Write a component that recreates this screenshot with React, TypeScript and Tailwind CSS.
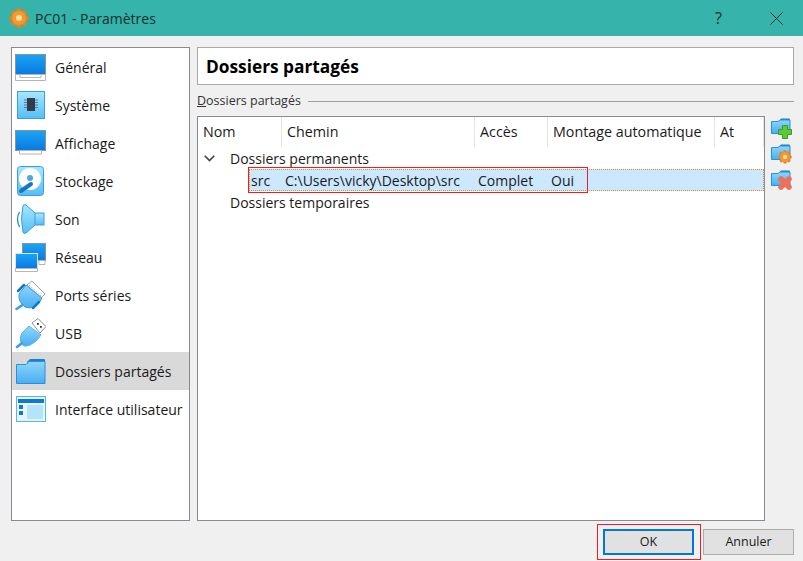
import React from "react";

const FONT = "font-['Open_Sans','Noto_Sans',sans-serif]";

function Defs() {
  return (
    <svg width="0" height="0" className="absolute">
      <defs>
        <linearGradient id="screen" x1="0" y1="0" x2="0" y2="1">
          <stop offset="0" stopColor="#1aa5f5" />
          <stop offset="1" stopColor="#0a78e0" />
        </linearGradient>
        <linearGradient id="light" x1="0" y1="0" x2="0" y2="1">
          <stop offset="0" stopColor="#a8e8ff" />
          <stop offset="1" stopColor="#55bdf5" />
        </linearGradient>
        <linearGradient id="folder" x1="0" y1="0" x2="0" y2="1">
          <stop offset="0" stopColor="#8ed6fb" />
          <stop offset="1" stopColor="#48aef0" />
        </linearGradient>
      </defs>
    </svg>
  );
}

function Monitor({ stand }: { stand?: boolean }) {
  return (
    <svg width="31" height="27" viewBox="0 0 31 27">
      <rect x="0.5" y="0.5" width="30" height="20" fill="url(#screen)" stroke="#8c9298" />
      {stand ? (
        <>
          <path d="M0.5 20.5h30v6h-30z" fill="#fff" stroke="#b5b5b5" />
          <path d="M5 21v2.5h21V21" fill="none" stroke="#b5b5b5" />
        </>
      ) : (
        <path d="M4.5 20.5h22v3.5h-22z" fill="#fff" stroke="#b5b5b5" />
      )}
    </svg>
  );
}

function Chip() {
  return (
    <svg width="28" height="28" viewBox="0 0 28 28">
      <rect x="0.5" y="0.5" width="27" height="27" fill="url(#light)" stroke="#3c9de0" />
      <rect x="10" y="7" width="8" height="13" fill="#333b48" />
      <path d="M7 9h3M7 11.5h3M7 14h3M7 16.5h3M18 9h3M18 11.5h3M18 14h3M18 16.5h3" stroke="#4d7fa3" />
    </svg>
  );
}

function Disk() {
  return (
    <svg width="27" height="30" viewBox="0 0 27 30">
      <rect x="0.5" y="0.5" width="26" height="29" rx="3" fill="url(#light)" stroke="#3c9de0" />
      <circle cx="13" cy="13" r="11" fill="#fff" />
      <circle cx="13" cy="12" r="3" fill="#4aa6e6" />
      <path d="M4 25L14 18" stroke="#1778c8" strokeWidth="4" strokeLinecap="round" />
    </svg>
  );
}

function Speaker() {
  return (
    <svg width="31" height="32" viewBox="0 0 31 32">
      <rect x="19" y="10" width="10" height="12" fill="url(#light)" stroke="#3c9de0" />
      <path d="M8 3Q8 1 11 2L20 10V22L11 30Q8 31 8 29Q5 16 8 3Z" fill="url(#light)" stroke="#3c9de0" />
      <path d="M4.5 9Q.5 16 4.5 24" fill="none" stroke="#2a8fdc" strokeWidth="1.4" />
    </svg>
  );
}

function Network() {
  return (
    <svg width="31" height="29" viewBox="0 0 31 29">
      <rect x="7.5" y="0.5" width="23" height="17" fill="url(#screen)" stroke="#8c9298" />
      <path d="M24 17.5h6v4h-6z" fill="#fff" stroke="#b5b5b5" />
      <rect x="0.5" y="10.5" width="22" height="15" fill="url(#screen)" stroke="#d8e4ee" />
      <path d="M.5 25.5h22v3H.5z" fill="#fff" stroke="#b5b5b5" />
    </svg>
  );
}

function SerialPort() {
  return (
    <svg width="31" height="31" viewBox="0 0 31 31">
      <path d="M17 1l13 13-4 4L12 5z" fill="#fff" stroke="#9aa3aa" />
      <path d="M14 5l12 11" stroke="#9aa3aa" strokeDasharray="1 1.5" />
      <path d="M11 5l16 13-3 5q-6 7-14 4Q3 22 4 14z" fill="url(#folder)" stroke="#3c9de0" />
      <path d="M3 11l6-6M18 28l6-6" stroke="#1778c8" strokeWidth="2.5" strokeLinecap="round" />
      <path d="M1.5 29l6-4" stroke="#3c9de0" strokeWidth="2.5" strokeLinecap="round" />
    </svg>
  );
}

function Usb() {
  return (
    <svg width="31" height="31" viewBox="0 0 31 31">
      <path d="M17 5l6-4.500 8 8-6 6.500z" fill="#fff" stroke="#8c9298" />
      <rect x="22" y="5" width="1.800" height="1.800" fill="#333" />
      <rect x="25" y="8" width="1.800" height="1.800" fill="#333" />
      <path d="M14 8l12 9q-4 7-11 10-7 3-9-2-2-5 1-10z" fill="url(#folder)" stroke="#5ab4ee" />
      <path d="M2 29l5-4" stroke="#3c9de0" strokeWidth="2.500" strokeLinecap="round" />
    </svg>
  );
}

function Folder() {
  return (
    <svg width="30" height="25" viewBox="0 0 30 25">
      <path d="M11 3l3-3h14q1 0 1 1v5H11z" fill="#1a7fd4" />
      <path d="M0.5 24.5V5.5L10 5.5l3-3h16v22z" fill="url(#folder)" stroke="#2a8fdc" />
    </svg>
  );
}

function Ui() {
  return (
    <svg width="30" height="26" viewBox="0 0 30 26">
      <rect x="0.5" y="0.5" width="29" height="25" fill="#e6f6ff" stroke="#55b5ee" />
      <rect x="2" y="3" width="26" height="4" fill="#0f78d0" />
      <rect x="3" y="9" width="4" height="4" fill="#0f78d0" />
      <rect x="3" y="15" width="4" height="4" fill="#0f78d0" />
      <rect x="11" y="9" width="16" height="14" fill="#b4e4fc" />
    </svg>
  );
}

function Gear({ size }: { size: number }) {
  return (
    <svg width={size} height={size} viewBox="0 0 20 20">
      {[0, 45, 90, 135, 180, 225, 270, 315].map((a) => (
        <circle key={a} cx="10" cy="2.800" r="2.600" fill="#e8821e" transform={`rotate(${a} 10 10)`} />
      ))}
      <circle cx="10" cy="10" r="7" fill="#f29a30" />
      <circle cx="10" cy="10" r="3" fill="#ffdf9e" />
    </svg>
  );
}

function FolderAction({ kind }: { kind: "add" | "edit" | "remove" }) {
  return (
    <div className="relative h-[22px] w-[22px]">
      <svg width="20" height="17" viewBox="0 0 20 17" className="absolute left-0 top-0">
        <path d="M9 1.500l1-1h8q1 0 1 1V5H9z" fill="#1a7fd4" />
        <path d="M0.500 15.500V3.500H7l2-1.500h10v13.500z" fill="url(#folder)" stroke="#2a8fdc" />
      </svg>
      {kind === "add" && (
        <svg width="14" height="14" viewBox="0 0 14 14" className="absolute left-[7px] top-[7px]">
          <path d="M4.500.5h5v4h4v5h-4v4h-5v-4h-4v-5h4z" fill="#5cc83a" stroke="#3e9c22" />
        </svg>
      )}
      {kind === "edit" && (
        <div className="absolute left-[7px] top-[6px]">
          <Gear size={14} />
        </div>
      )}
      {kind === "remove" && (
        <svg width="14" height="14" viewBox="0 0 14 14" className="absolute left-[7px] top-[6px]">
          <path d="M3 3l8 8M11 3l-8 8" stroke="#ee7058" strokeWidth="5.500" strokeLinecap="round" />
        </svg>
      )}
    </div>
  );
}

const sections: { label: string; icon: React.ReactNode; active?: boolean }[] = [
  { label: "Général", icon: <Monitor stand /> },
  { label: "Système", icon: <Chip /> },
  { label: "Affichage", icon: <Monitor /> },
  { label: "Stockage", icon: <Disk /> },
  { label: "Son", icon: <Speaker /> },
  { label: "Réseau", icon: <Network /> },
  { label: "Ports séries", icon: <SerialPort /> },
  { label: "USB", icon: <Usb /> },
  { label: "Dossiers partagés", icon: <Folder />, active: true },
  { label: "Interface utilisateur", icon: <Ui /> },
];

const columns = [
  { label: "Nom", width: "w-[84px]" },
  { label: "Chemin", width: "w-[193px]" },
  { label: "Accès", width: "w-[73px]" },
  { label: "Montage automatique", width: "w-[167px]" },
  { label: "At", width: "w-[49px]" },
];

export default function App() {
  return (
    <div className={`${FONT} relative flex h-[561px] w-[803px] flex-col overflow-hidden bg-[#f0f0f0] text-[14px] text-[#1a1a1a]`}>
      <Defs />

      <div className="flex h-9 shrink-0 items-center bg-[#36b3ab] pl-[9px]">
        <Gear size={20} />
        <span className="ml-[6px] text-[14px] text-[#10302e]">PC01 - Paramètres</span>
        <span className="ml-auto mr-[48px] text-[16px] text-[#10302e]">?</span>
        <svg width="13" height="13" viewBox="0 0 13 13" className="mr-[20px]">
          <path d="M.5.5l12 12M12.5.5l-12 12" stroke="#10302e" />
        </svg>
      </div>

      <div className="flex min-h-0 flex-1 gap-[7px] pl-[11px] pr-[9px] pt-[11px]">
        <nav className="h-[474px] w-[179px] shrink-0 border border-[#8a8a94] bg-white">
          {sections.map((s) => (
            <div key={s.label} className={`flex h-[38px] items-center ${s.active ? "bg-[#d9d9d9]" : ""}`}>
              <div className="ml-[3px] mr-[9px] flex w-[31px] shrink-0 justify-center">{s.icon}</div>
              <span className="whitespace-nowrap">{s.label}</span>
            </div>
          ))}
        </nav>

        <div className="flex min-w-0 flex-1 flex-col">
          <div className="flex h-[38px] items-center border border-[#a9a9a9] bg-white pl-2 pt-[2px] text-[17.3px] font-bold text-black">
            Dossiers partagés
          </div>

          <div className="mt-[6px] flex h-[20px] items-center text-[12.5px] text-[#333]">
            <span className="whitespace-nowrap">
              <span className="underline">D</span>ossiers partagés
            </span>
            <div className="ml-[7px] h-px flex-1 bg-[#a0a0a0]" />
          </div>

          <div className="mt-[5px] flex gap-[6px]">
            <div className="h-[405px] w-[568px] border border-[#8a8a94] bg-white">
              <div className="flex h-[30px] items-center text-[14.3px]">
                {columns.map((c) => (
                  <div key={c.label} className={`${c.width} flex h-full shrink-0 items-center border-r border-[#e4e4e4] pl-[5px]`}>
                    {c.label}
                  </div>
                ))}
              </div>

              <div className="flex h-[22px] items-center">
                <svg width="11" height="7" viewBox="0 0 11 7" className="ml-[6px]">
                  <path d="M.7.7L5.500 5.500l4.800-4.800" fill="none" stroke="#444" strokeWidth="1.600" />
                </svg>
                <span className="ml-[15px]">Dossiers permanents</span>
              </div>

              <div className="ml-[51px] flex h-[22px] items-center border border-dotted border-[#f08a24] bg-[#cce8ff]">
                <span className="ml-[1px] w-[34px]">src</span>
                <span className="w-[193px]">C:\Users\vicky\Desktop\src</span>
                <span className="w-[73px]">Complet</span>
                <span>Oui</span>
              </div>

              <div className="flex h-[22px] items-center pl-[32px]">Dossiers temporaires</div>
            </div>

            <div className="flex flex-col gap-[4px] pt-[2px]">
              <FolderAction kind="add" />
              <FolderAction kind="edit" />
              <FolderAction kind="remove" />
            </div>
          </div>
        </div>
      </div>

      <div className="flex h-[40px] shrink-0 items-start justify-end gap-[9px] pr-[9px] pt-[8px] text-[12.5px]">
        <button className="h-[26px] w-[91px] border-2 border-[#0078d7] bg-[#e1e1e1]">OK</button>
        <button className="h-[26px] w-[91px] border border-[#adadad] bg-[#e1e1e1]">Annuler</button>
      </div>

      {/* red annotations drawn over the dialog */}
      <div className="absolute left-[248px] top-[167px] h-[26px] w-[340px] border border-[#ee1c25]" />
      <div className="absolute left-[597px] top-[524px] h-[36px] w-[104px] border border-[#ee1c25]" />
    </div>
  );
}
